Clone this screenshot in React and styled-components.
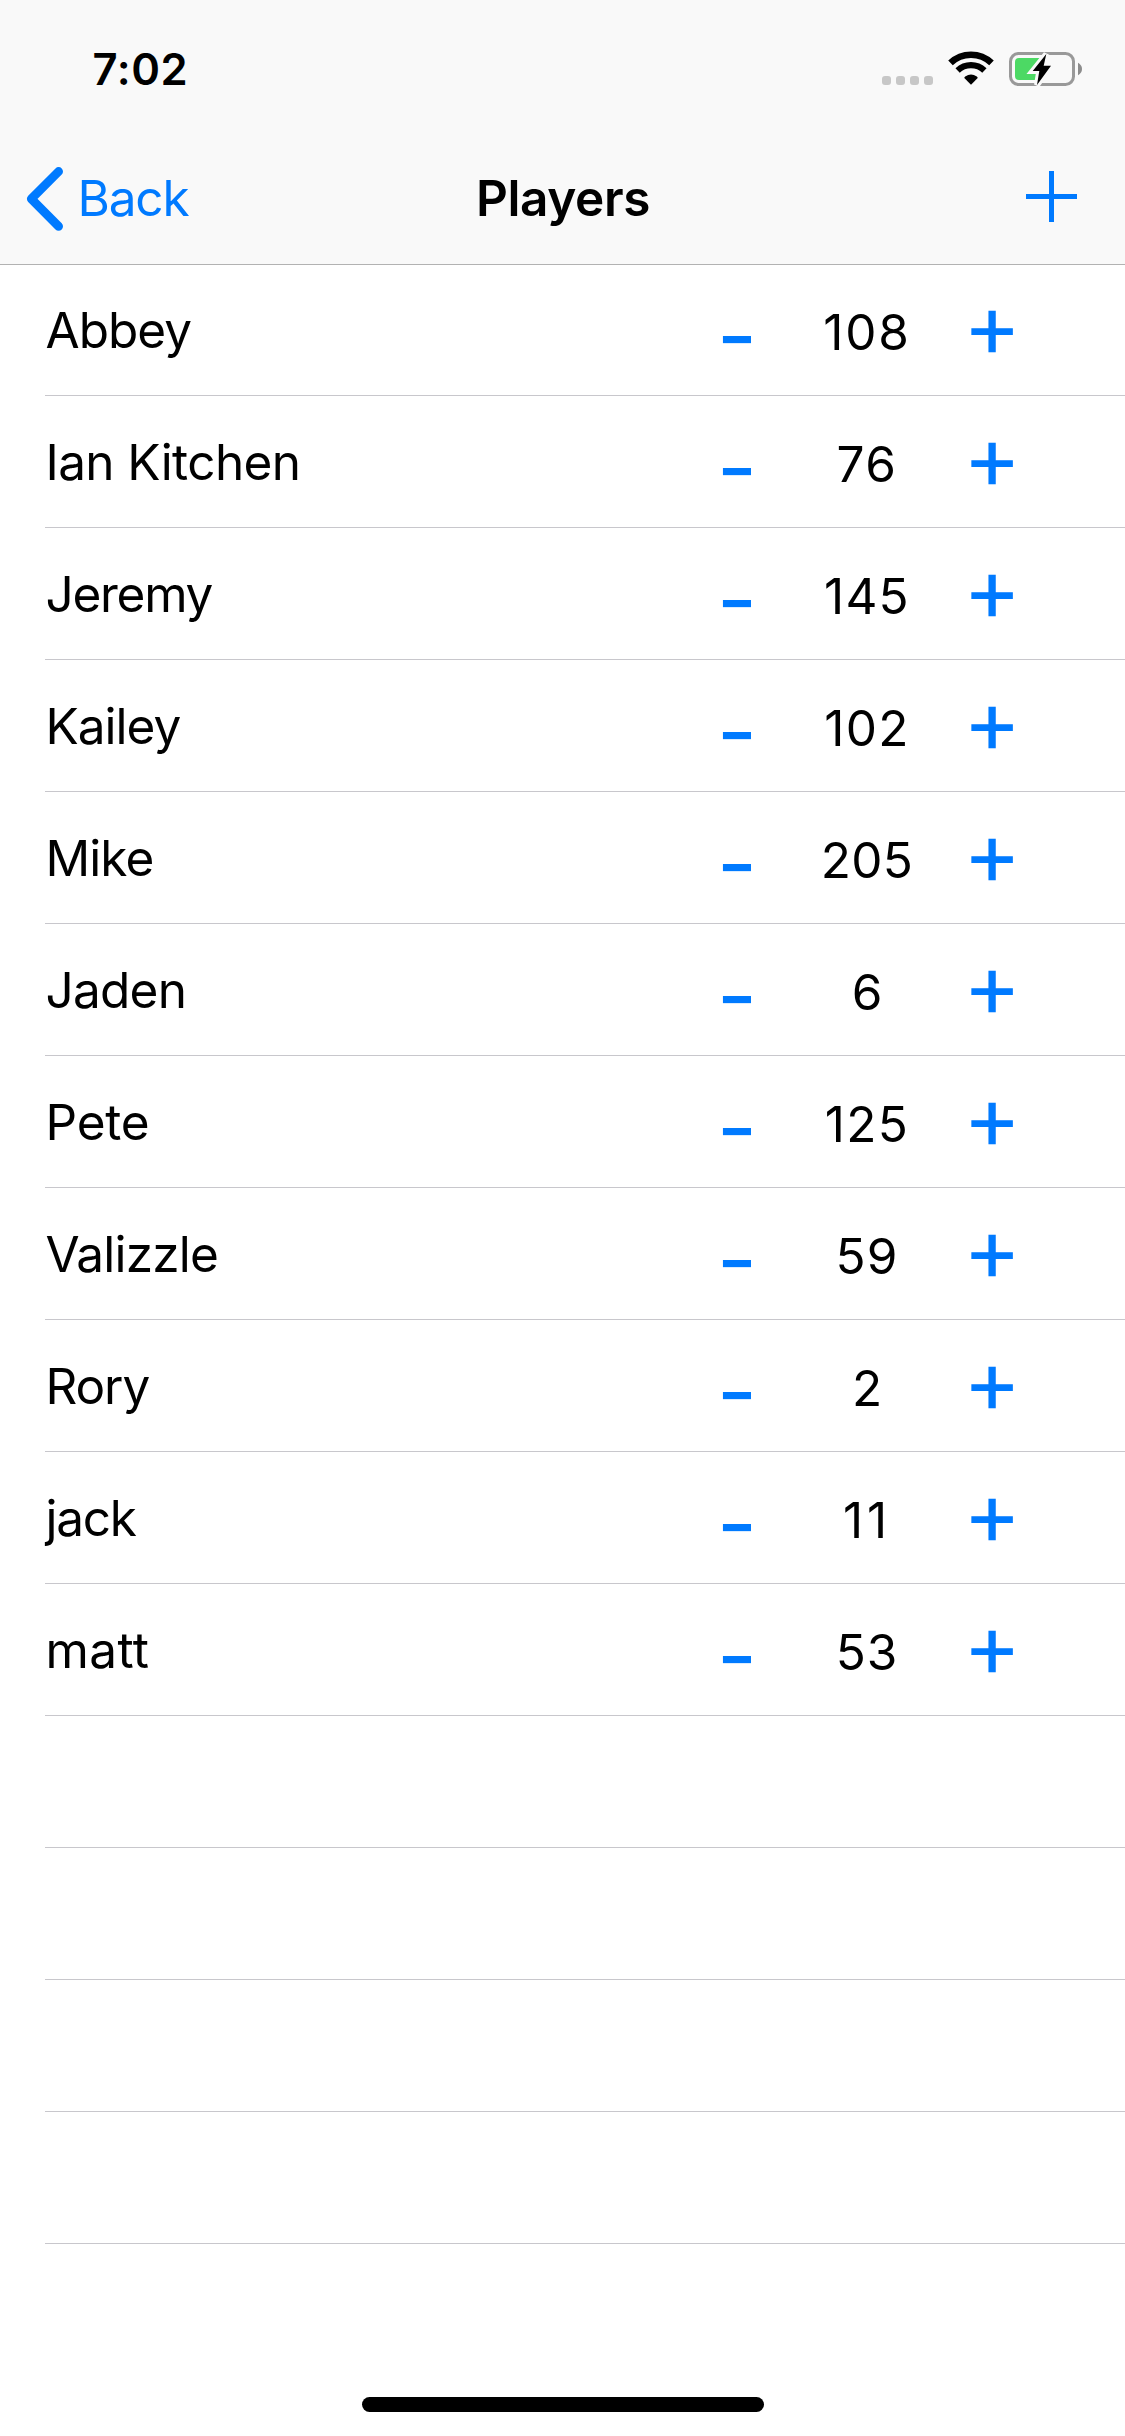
import React, { useState } from 'react';
import styled, { createGlobalStyle } from 'styled-components';

const BLUE = '#007aff';
const BAR = '#f9f9f9';

const GlobalStyle = createGlobalStyle`
  * {
    box-sizing: border-box;
  }
  body {
    margin: 0;
    background: #fff;
    font-family: Inter, 'Liberation Sans', sans-serif;
    color: #000;
  }
`;

const Screen = styled.div`
  display: flex;
  flex-direction: column;
  width: 1125px;
  height: 2436px;
  overflow: hidden;
  background: #fff;
`;

const Header = styled.header`
  flex: none;
  height: 265px;
  margin-bottom: -1px;
  background: ${BAR};
  border-bottom: 1px solid #b2b2b2;
`;

const StatusBar = styled.div`
  display: flex;
  justify-content: space-between;
  height: 132px;
  padding: 0 43px 0 92.6px;
`;

const Clock = styled.time`
  font-size: 43.6px;
  font-weight: 600;
  line-height: 139px;
  letter-spacing: 0.5px;
`;

const Indicators = styled.div`
  display: flex;
  align-items: flex-end;
  height: 86px;
`;

const SignalDots = styled.div`
  display: flex;
  gap: 5px;
  margin: 0 14px 1px 0;
`;

const Dot = styled.span`
  width: 9px;
  height: 9px;
  border-radius: 3px;
  background: #c7c7c7;
`;

const WifiIcon = styled.svg`
  display: block;
  width: 48px;
  height: 34px;
  margin: 0 13px 1px 0;
`;

const BatteryIcon = styled.svg`
  display: block;
  width: 74px;
  height: 36px;
  margin-bottom: -1px;
`;

const NavBar = styled.nav`
  display: grid;
  grid-template-columns: 1fr auto 1fr;
  height: 132px;
  padding: 0 48px 0 26px;
`;

const NavButton = styled.button`
  display: flex;
  justify-self: ${(p) => p.$side};
  align-items: flex-start;
  height: 132px;
  padding: 0;
  border: 0;
  background: none;
  color: ${BLUE};
  font: inherit;
  font-size: 49.5px;
  line-height: 132px;
  letter-spacing: -1.1px;
`;

const BackChevron = styled.svg`
  width: 38px;
  height: 64px;
  margin: 34.5px 13.4px 0 0;
`;

const AddIcon = styled.svg`
  width: 51px;
  height: 51px;
  margin-top: 39px;
`;

const Title = styled.h1`
  margin: 0;
  padding-left: 23px;
  font-size: 49.5px;
  font-weight: 600;
  line-height: 132px;
  letter-spacing: -0.4px;
`;

const PlayerList = styled.ul`
  flex: 1;
  margin: 0;
  padding: 0 0 0 45px;
  list-style: none;
`;

const Row = styled.li`
  display: grid;
  grid-template-columns: 1fr 130px 130px 120px;
  align-items: start;
  height: 132px;
  padding-right: 73px;
  border-bottom: 1px solid #c8c7cc;
`;

const Name = styled.span`
  padding-left: 0.5px;
  font-size: 49.5px;
  line-height: 132px;
  letter-spacing: ${(p) => p.$tracking}px;
  white-space: nowrap;
`;

const Score = styled.span`
  font-size: 49.5px;
  line-height: 136px;
  letter-spacing: ${(p) => p.$tracking}px;
  text-align: center;
`;

const StepButton = styled.button`
  display: flex;
  justify-content: center;
  height: 131px;
  padding: 0;
  border: 0;
  background: none;
  color: ${BLUE};
  font: inherit;
  font-size: 88px;
  line-height: ${(p) => (p.$minus ? 143 : 123)}px;
`;

const HomeIndicator = styled.div`
  flex: none;
  align-self: center;
  width: 402px;
  height: 15px;
  margin-bottom: 24px;
  border-radius: 8px;
  background: #000;
`;

const PLAYERS = [
  { name: 'Abbey', score: 108, tracking: -1, digits: 1.8 },
  { name: 'Ian Kitchen', score: 76, tracking: -0.61, digits: 1.5 },
  { name: 'Jeremy', score: 145, tracking: -1.29, digits: 1.2 },
  { name: 'Kailey', score: 102, tracking: -0.99, digits: 1.4 },
  { name: 'Mike', score: 205, tracking: -0.92, digits: 0.4 },
  { name: 'Jaden', score: 6, tracking: -0.75, digits: 0 },
  { name: 'Pete', score: 125, tracking: -0.21, digits: 1.4 },
  { name: 'Valizzle', score: 59, tracking: -0.8, digits: 1.1 },
  { name: 'Rory', score: 2, tracking: -1.1, digits: 0 },
  { name: 'jack', score: 11, tracking: -1.3, digits: 3.9 },
  { name: 'matt', score: 53, tracking: 0.4, digits: 0.8 },
];

const EMPTY_ROWS = 4;

function Wifi() {
  return (
    <WifiIcon viewBox="947 51.5 48 34" aria-label="Wi-Fi">
      <g fill="none" stroke="#000">
        <path d="M950.5 63.4A29.8 29.8 0 0 1 991.5 63.4" strokeWidth="6.6" />
        <path d="M957.6 70.9A19.5 19.5 0 0 1 984.4 70.9" strokeWidth="6.2" />
      </g>
      <path d="M971 85.2L964.3 78.6Q964.3 77.6 965.2 77A10.5 10.5 0 0 1 976.8 77Q977.7 77.6 977.7 78.6Z" />
    </WifiIcon>
  );
}

function Battery() {
  const bolt = 'M1046.3 54L1032.7 71H1039.3L1037 85L1051 65.7H1043.7Z';
  return (
    <BatteryIcon viewBox="1008 51 74 36" aria-label="Battery charging">
      <rect x="1010.5" y="53.5" width="63" height="31" rx="8" fill="none" stroke="#999" strokeWidth="3" />
      <rect x="1015" y="58" width="24.5" height="22" rx="4" fill="#4cd964" />
      <path d="M1036 58h6v8l-5 14h-2z" fill="#4cd964" />
      <path d="M1078 62.8Q1082 65 1082 69T1078 75.2Z" fill="#8c8c8c" />
      <path d={bolt} fill={BAR} stroke={BAR} strokeWidth="6" />
      <path d={bolt} fill="#000" />
    </BatteryIcon>
  );
}

export default function App() {
  const [scores, setScores] = useState(PLAYERS.map((p) => p.score));
  const change = (index, by) =>
    setScores((list) => list.map((s, i) => (i === index ? s + by : s)));

  return (
    <Screen>
      <GlobalStyle />
      <Header>
        <StatusBar>
          <Clock>7:02</Clock>
          <Indicators>
            <SignalDots>
              <Dot />
              <Dot />
              <Dot />
              <Dot />
            </SignalDots>
            <Wifi />
            <Battery />
          </Indicators>
        </StatusBar>
        <NavBar>
          <NavButton $side="start">
            <BackChevron viewBox="26 166.5 38 64" aria-hidden="true">
              <path
                d="M58.6 171L31.3 198.3L58.6 225.8"
                fill="none"
                stroke={BLUE}
                strokeWidth="8.8"
                strokeLinecap="round"
                strokeLinejoin="round"
              />
            </BackChevron>
            Back
          </NavButton>
          <Title>Players</Title>
          <NavButton $side="end" aria-label="Add player">
            <AddIcon viewBox="0 0 51 51" fill={BLUE} aria-hidden="true">
              <rect x="23" width="5" height="51" />
              <rect y="23" width="51" height="5" />
            </AddIcon>
          </NavButton>
        </NavBar>
      </Header>
      <PlayerList>
        {PLAYERS.map((p, i) => (
          <Row key={p.name}>
            <Name $tracking={p.tracking}>{p.name}</Name>
            <StepButton $minus onClick={() => change(i, -1)}>-</StepButton>
            <Score $tracking={p.digits}>{scores[i]}</Score>
            <StepButton onClick={() => change(i, 1)}>+</StepButton>
          </Row>
        ))}
        {Array.from({ length: EMPTY_ROWS }, (_, i) => (
          <Row key={i} />
        ))}
      </PlayerList>
      <HomeIndicator />
    </Screen>
  );
}
